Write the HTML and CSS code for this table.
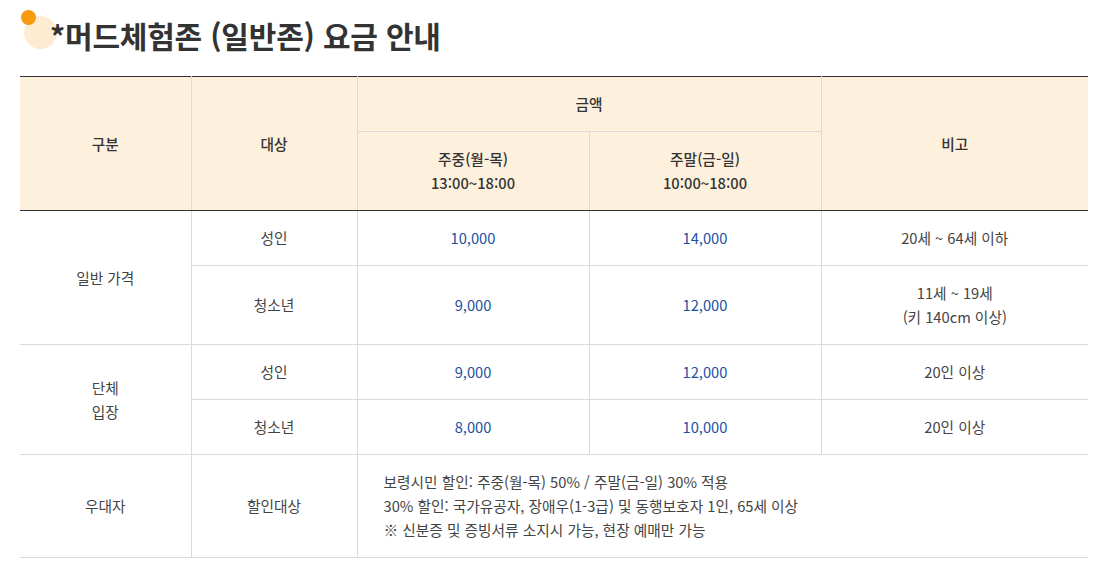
FILE: index.html
```html
<!DOCTYPE html>
<html lang="ko">
<head>
<meta charset="utf-8">
<link rel="stylesheet" href="styles.css">
</head>
<body>
<div class="page">
  <h2 class="title"><span class="deco"><span class="deco-big"></span><span class="deco-dot"></span></span>*머드체험존 (일반존) 요금 안내</h2>
  <table class="fee">
    <colgroup>
      <col class="c1"><col class="c2"><col class="c3"><col class="c4"><col class="c5">
    </colgroup>
    <thead>
      <tr class="h1">
        <th rowspan="2">구분</th>
        <th rowspan="2">대상</th>
        <th colspan="2" class="amount">금액</th>
        <th rowspan="2">비고</th>
      </tr>
      <tr class="h2">
        <th>주중(월-목)<br>13:00~18:00</th>
        <th>주말(금-일)<br>10:00~18:00</th>
      </tr>
    </thead>
    <tbody>
      <tr class="r55">
        <td rowspan="2">일반 가격</td>
        <td>성인</td>
        <td class="price">10,000</td>
        <td class="price">14,000</td>
        <td>20세 ~ 64세 이하</td>
      </tr>
      <tr class="r79">
        <td>청소년</td>
        <td class="price">9,000</td>
        <td class="price">12,000</td>
        <td>11세 ~ 19세<br>(키 140cm 이상)</td>
      </tr>
      <tr class="r55">
        <td rowspan="2">단체<br>입장</td>
        <td>성인</td>
        <td class="price">9,000</td>
        <td class="price">12,000</td>
        <td>20인 이상</td>
      </tr>
      <tr class="r55">
        <td>청소년</td>
        <td class="price">8,000</td>
        <td class="price">10,000</td>
        <td>20인 이상</td>
      </tr>
      <tr class="r103">
        <td>우대자</td>
        <td>할인대상</td>
        <td colspan="3" class="note">보령시민 할인: 주중(월-목) 50% / 주말(금-일) 30% 적용<br>30% 할인: 국가유공자, 장애우(1-3급) 및 동행보호자 1인, 65세 이상<br>※ 신분증 및 증빙서류 소지시 가능, 현장 예매만 가능</td>
      </tr>
    </tbody>
  </table>
</div>
</body>
</html>
```

FILE: styles.css
```css
* { box-sizing: border-box; }
html, body { margin: 0; padding: 0; background: #fff; }
body {
  font-family: "Noto Sans CJK KR", "Noto Sans", sans-serif;
  color: #444;
}
.page { padding: 0 16px 0 20px; }
.title {
  position: relative;
  isolation: isolate;
  margin: 0;
  padding: 14px 0 0 30px;
  height: 76px;
  font-size: 30px;
  line-height: 42px;
  font-weight: 700;
  color: #333;
  letter-spacing: -0.2px;
}
.deco { position: absolute; left: 0; top: 0; width: 40px; height: 50px; z-index: -1; }
.deco-big {
  position: absolute; left: 4px; top: 16px;
  width: 33px; height: 33px; border-radius: 50%;
  background: #fdebd2;
}
.deco-dot {
  position: absolute; left: 1px; top: 10px;
  width: 15px; height: 15px; border-radius: 50%;
  background: #f79a0e;
}
.fee {
  width: 1068px;
  border-collapse: collapse;
  table-layout: fixed;
  font-size: 14.7px;
  line-height: 24px;
  text-align: center;
}
.c1 { width: 171px; }
.c2 { width: 166px; }
.c3 { width: 232px; }
.c4 { width: 232px; }
.c5 { width: 267px; }
.fee th, .fee td {
  border: 1px solid #dadada;
  padding: 0;
  vertical-align: middle;
}
.fee tr > :first-child { border-left: 0; }
.fee tr > :last-child { border-right: 0; }
.fee thead th {
  background: #fdf0dd;
  font-weight: 500;
  color: #333;
}
.fee thead tr.h1 th { border-top: 1px solid #333; }
.fee thead tr.h2 th { border-top: 1px solid #333; }
.fee thead tr.h2 th, .fee thead th[rowspan] { border-bottom: 1px solid #333; }
.fee tr.h1 { height: 55px; }
.fee tr.h2 { height: 79px; }
.fee tr.r55 { height: 55px; }
.fee tr.r79 { height: 79px; }
.fee tr.r103 { height: 103px; }
.fee td { color: #444; }
.fee td.price { color: #1d50a2; }
.fee td.note { text-align: left; padding-left: 26px; }
```
